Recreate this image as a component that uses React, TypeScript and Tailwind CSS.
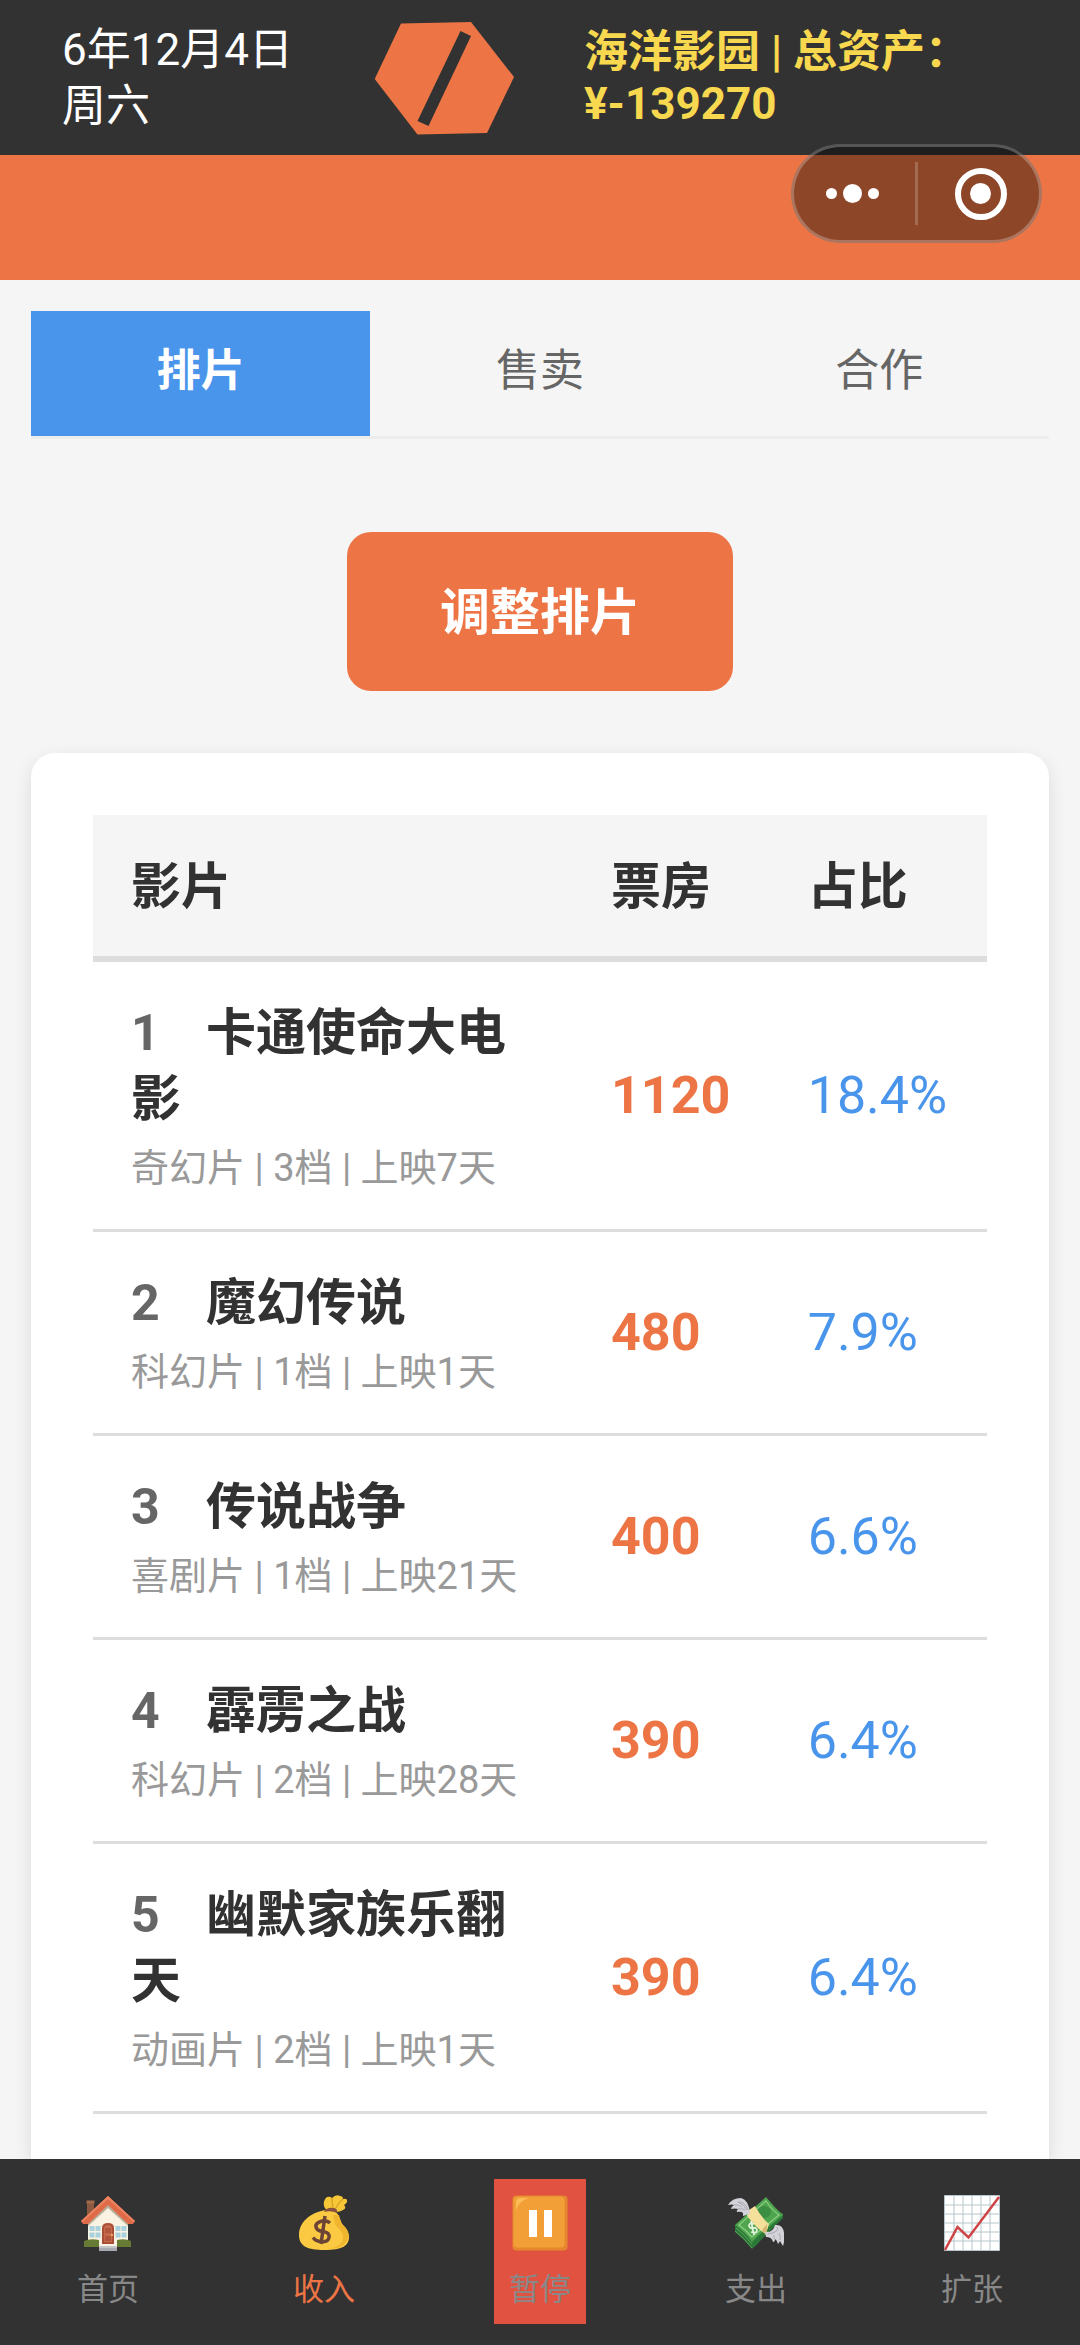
import type { ReactNode } from "react";

type Film = { rank: number; title: string; meta: string; box: string; share: string };

const films: Film[] = [
  { rank: 1, title: "卡通使命大电影", meta: "奇幻片 | 3档 | 上映7天", box: "1120", share: "18.4%" },
  { rank: 2, title: "魔幻传说", meta: "科幻片 | 1档 | 上映1天", box: "480", share: "7.9%" },
  { rank: 3, title: "传说战争", meta: "喜剧片 | 1档 | 上映21天", box: "400", share: "6.6%" },
  { rank: 4, title: "霹雳之战", meta: "科幻片 | 2档 | 上映28天", box: "390", share: "6.4%" },
  { rank: 5, title: "幽默家族乐翻天", meta: "动画片 | 2档 | 上映1天", box: "390", share: "6.4%" },
];

function Logo() {
  return (
    <svg className="h-[114px] w-[140px] shrink-0" viewBox="374 21 140 114" aria-label="影园标志">
      <path d="M401 23.5 471 22 514 77 487 133 417.5 134.5 374.7 79Z" fill="#ed7545" />
      <path d="M460.5 31 471 36 428.5 126 417.5 121Z" fill="#323232" />
    </svg>
  );
}

function HouseIcon() {
  return (
    <svg className="size-[56px]" viewBox="0 0 56 56" aria-hidden="true">
      <path d="M7 6h7v16H7z" fill="#8d5a41" />
      <path d="M6.500 5.500h8v3h-8z" fill="#a5684a" />
      <path d="M28 8 8 27v25h40V27z" fill="#faf3e3" />
      <path d="M28 9 8 27v4l20-18 20 18v-4z" fill="#b9ad98" />
      <path d="M28 1 1 26l2 3h5L28 10l20 19h5l2-3z" fill="#df6b48" />
      <path d="M28 1 1 26l1 1.500L28 4l26 23.500 1-1.500z" fill="#ee8460" />
      <path d="M4 46q6-3 15-1v7H4zM37 45q8-2 14 1v6H37z" fill="#687b35" />
      <path d="M19 51h18v5H19z" fill="#a7aab0" />
      <path d="M19 51h18v2H19z" fill="#c3c5c9" />
      <path d="M22 49V33q0-5 6-5t6 5v16z" fill="#a94f38" />
      <path d="M24 47V34q0-4 4-4t4 4v13z" fill="#c8694d" />
      <path d="M25 33h6v5h-6zM25 41h6v5h-6z" fill="#b0563d" />
      <circle cx="32" cy="40" r="1" fill="#f2c864" />
      <path d="M9.500 31h5v5h-5zM15.500 31h5v5h-5zM9.500 37.500h5v5h-5zM15.500 37.500h5v5h-5zM35.500 31h5v5h-5zM41.500 31h5v5h-5zM35.500 37.500h5v5h-5zM41.500 37.500h5v5h-5z" fill="#a9d2dc" />
    </svg>
  );
}

function MoneyBagIcon() {
  return (
    <svg className="size-[56px]" viewBox="0 0 56 56" aria-hidden="true">
      <path d="M32 16C26 12 27 5 31 2q3-1 5 1 4-4 8-2 3 0 3 3 5-1 4 3-1 2-3 3 3 3-1 5-3 2-7 2z" fill="#f6c736" />
      <path d="M36 3q0 6 1 10M47 4q-5 4-7 9" fill="none" stroke="#dba526" strokeWidth="1.500" />
      <path d="M31 15C18 16 3 25 3 40c0 11 8 15 26 15 17 0 24-4 24-13 0-6-4-10-7-13-2-5-3-9-6-12z" fill="#fbca42" />
      <path d="M43 20q1 7 4 10 7 6 5 13-2 10-20 11 15-3 15-11 0-6-6-11-3-4-4-12z" fill="#efb52e" />
      <path d="M28 17q3-5 9-4 5 0 4 5-6-3-13-1z" fill="#85503d" />
      <path d="M34 28q-3-3-8-2-7 2-6 6 1 4 7 4.500 7 1 6 6-1 5-8 4-5 0-8-4M29 21l-4 28" fill="none" stroke="#6c4436" strokeWidth="3.500" />
    </svg>
  );
}

function PauseIcon() {
  return (
    <svg className="size-[56px]" viewBox="0 0 56 56" aria-hidden="true">
      <rect x="0.500" y="0.500" width="55" height="55" rx="4" fill="#e6872f" />
      <rect x="1.500" y="1.500" width="51" height="51" rx="4" fill="#f29f37" />
      <path d="M4 15V8q0-5 5-5h8q-9 2-13 12z" fill="#fbbd58" />
      <path d="M17 15h8v27h-8zM32 15h8v27h-8z" fill="#fff" />
    </svg>
  );
}

function FlyingMoneyIcon() {
  return (
    <svg className="size-[56px]" viewBox="0 0 56 56" aria-hidden="true">
      <path d="M7 30v7q9 7 17 17 5-4 9-9l22-22v-5z" fill="#2c7838" />
      <path d="M38 2 7 30q10 7 17 17l7-7 24-20Q46 12 38 2z" fill="#4fa44e" />
      <path d="M38 6 11 30q8 6 13 12L51 20Q44 15 38 6z" fill="none" stroke="#8ccf83" strokeWidth="1.200" />
      <ellipse cx="36" cy="17" rx="7" ry="6" fill="#3c8e42" />
      <path d="M7 36q9 7 17 17M8 33q9 7 16 16" stroke="#66ad61" strokeWidth="0.800" fill="none" />
      <path d="m21 15 6-4q6 11 14 18l-3 10q-8-4-19-18z" fill="#f4df9b" />
      <path d="M39 29v8l-2 2-3-4z" fill="#d2b873" />
      <path d="M26 29q-5-2-5 2 1 3 4 2t4 2q0 4-6 2M23 26l3 14" fill="none" stroke="#e2f3dd" strokeWidth="1.800" />
      <path d="M22 19q-1-14-9-16Q4 3 0 10q4-1 6 0-3 2-3 4 4-1 7 0-2 2-1 3 4-1 6 1 0 2 0 3 5-2 7-2z" fill="#d4d2d9" />
      <path d="M20 15Q17 6 10 7q6 2 9 8M14 12q-4-3-8-2M17 15q-3-2-7-1" fill="none" stroke="#aaa8b2" strokeWidth="1" />
      <path d="M37 37q8 1 10-7 8-1 9 8 1 7-1 13-2-3-3-5-1 2-2 3-1-4-3-5 0 3-2 3-1-5-7-5z" fill="#d4d2d9" />
      <path d="M49 32q3 5-9 7M52 45q1-4-1-7M46 44q1-3-1-4" fill="none" stroke="#aaa8b2" strokeWidth="1" />
    </svg>
  );
}

function ChartIcon() {
  return (
    <svg className="size-[56px]" viewBox="0 0 56 56" aria-hidden="true">
      <path d="M.5.5h55v55H.5z" fill="#fff" />
      <path d="M.5.5h55v55H.5zM10 0v56M19 0v56M28 0v56M37 0v56M46 0v56M0 10h56M0 19h56M0 28h56M0 37h56M0 46h56" fill="none" stroke="#b7c5cc" strokeWidth="1" />
      <path d="M1 55 13.500 32 24.500 42.500 55 2" fill="none" stroke="#cf4446" strokeWidth="2.500" />
    </svg>
  );
}

function NavItem({ icon, label, tone = "text-[#888888]", box = "" }: { icon: ReactNode; label: string; tone?: string; box?: string }) {
  return (
    <li className="flex flex-1 justify-center">
      <button type="button" className={`flex flex-col items-center gap-[18px] px-[15px] pt-4 pb-[13px] ${tone} ${box}`}>
        {icon}
        <span className="text-[31px] leading-[42px]">{label}</span>
      </button>
    </li>
  );
}

export default function App() {
  return (
    <div className="flex h-screen flex-col overflow-hidden bg-[#f5f5f5] font-['Roboto','Noto_Sans_CJK_SC',sans-serif] text-[#323232]">
      <header className="relative shrink-0">
        <div className="flex h-[155px] items-center bg-[#323232] px-[62px]">
          <div className="w-[312px] text-[44px] leading-[56px] text-white">
            6年12月4日
            <br />
            周六
          </div>
          <Logo />
          <div className="ml-[70px] flex-1 text-[44px] leading-[52px] font-bold text-[#f8d84e]">
            海洋影园 | 总资产：
            <br />
            ¥-139270
          </div>
        </div>
        <div className="h-[125px] bg-[#ed7545]" />
        <div className="absolute top-[144px] right-[38px] flex h-[99px] w-[251px] items-center rounded-full border-[3px] border-white/25 bg-black/40">
          <button type="button" aria-label="更多" className="flex h-full flex-1 items-center justify-center gap-[6px] pr-1">
            <span className="size-[11px] rounded-full bg-white" />
            <span className="size-[19px] rounded-full bg-white" />
            <span className="size-[11px] rounded-full bg-white" />
          </button>
          <span className="h-[63px] w-[3px] bg-white/20" />
          <button type="button" aria-label="关闭" className="flex h-full flex-1 items-center justify-center pl-1">
            <span className="flex size-[52px] items-center justify-center rounded-full border-[6px] border-white">
              <span className="size-[21px] rounded-full bg-white" />
            </span>
          </button>
        </div>
      </header>

      <main className="flex min-h-0 flex-1 flex-col px-[31px] pt-[31px]">
        <div role="tablist" className="flex shrink-0 border-b-[3px] border-[#ececec] text-[44px] leading-[57px]">
          <button type="button" role="tab" aria-selected="true" className="flex-1 bg-[#4a95ec] pt-8 pb-9 font-bold text-white">
            排片
          </button>
          <button type="button" role="tab" aria-selected="false" className="flex-1 pt-8 pb-9 text-[#666666]">
            售卖
          </button>
          <button type="button" role="tab" aria-selected="false" className="flex-1 pt-8 pb-9 text-[#666666]">
            合作
          </button>
        </div>

        <button type="button" className="mt-[93px] mb-[62px] shrink-0 self-center rounded-3xl bg-[#ed7545] px-[93px] pt-12 pb-[45px] text-[50px] leading-[66px] font-bold text-white">
          调整排片
        </button>

        <section className="min-h-0 flex-1 rounded-t-3xl bg-white px-[62px] pt-[62px] shadow-[0_6px_18px_rgba(0,0,0,0.1)]">
          <table className="w-full table-fixed border-collapse text-left text-[50px] leading-[66px]">
            <colgroup>
              <col className="w-[480px]" />
              <col className="w-[22%]" />
              <col />
            </colgroup>
            <thead>
              <tr className="border-b-[6px] border-[#dddddd] bg-[#f5f5f5]">
                <th className="px-[38px] pt-[39px] pb-9 font-bold">影片</th>
                <th className="px-[38px] pt-[39px] pb-9 font-bold">票房</th>
                <th className="px-[38px] pt-[39px] pb-9 font-bold">占比</th>
              </tr>
            </thead>
            <tbody>
              {films.map((f) => (
                <tr key={f.rank} className="border-b-[3px] border-[#dddddd]">
                  <td className="px-[38px] pt-[38px] pb-9">
                    <div className="font-bold">
                      <span className="inline-block w-[75px] text-[#666666]">{f.rank}</span>
                      {f.title}
                    </div>
                    <div className="mt-3 text-[38px] leading-[49px] whitespace-nowrap text-[#999999]">{f.meta}</div>
                  </td>
                  <td className="px-[38px] text-[52px] font-bold text-[#ed7545]">{f.box}</td>
                  <td className="px-[38px] text-[52px] text-[#4a95ec]">{f.share}</td>
                </tr>
              ))}
            </tbody>
          </table>
        </section>
      </main>

      <nav className="relative shrink-0 bg-[#323232] pt-5 pb-[21px]">
        <ul className="flex">
          <NavItem icon={<HouseIcon />} label="首页" />
          <NavItem icon={<MoneyBagIcon />} label="收入" tone="text-[#ed7545]" />
          <NavItem icon={<PauseIcon />} label="暂停" box="bg-[#e25241]" />
          <NavItem icon={<FlyingMoneyIcon />} label="支出" />
          <NavItem icon={<ChartIcon />} label="扩张" />
        </ul>
      </nav>
    </div>
  );
}
